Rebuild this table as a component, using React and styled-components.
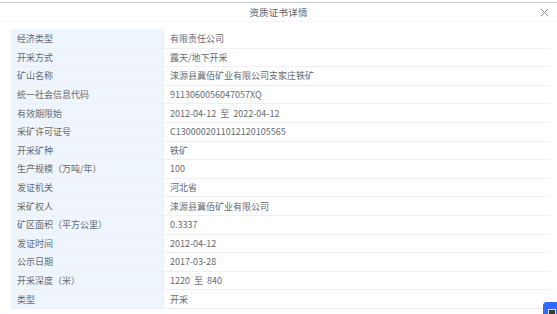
import React from 'react';
import styled, { createGlobalStyle } from 'styled-components';

const GlobalStyle = createGlobalStyle`
    html, body {
        margin: 0;
        padding: 0;
        background: #ffffff;
    }
    body {
        font-family: "Noto Sans CJK SC", "Noto Sans", sans-serif;
        overflow: hidden;
    }
`;

const rows = [
    ['经济类型', '有限责任公司'],
    ['开采方式', '露天/地下开采'],
    ['矿山名称', '涞源县冀佰矿业有限公司支家庄铁矿'],
    ['统一社会信息代码', '911306005604705 7XQ'.replace(' ', '')],
    ['有效期限始', '2012-04-12 \u00a0至\u00a0 2022-04-12'],
    ['采矿许可证号', 'C1300002011012120105565'],
    ['开采矿种', '铁矿'],
    ['生产规模（万吨/年）', '100'],
    ['发证机关', '河北省'],
    ['采矿权人', '涞源县冀佰矿业有限公司'],
    ['矿区面积（平方公里）', '0.3337'],
    ['发证时间', '2012-04-12'],
    ['公示日期', '2017-03-28'],
    ['开采深度（米）', '1220 \u00a0至\u00a0 840'],
    ['类型', '开采'],
];

const App = () => {
    return (
        <>
            <GlobalStyle />
            <Dialog>
                <Header>
                    <Title>资质证书详情</Title>
                    <Close>
                        <svg width="9" height="9" viewBox="0 0 10 10">
                            <path d="M1 1 L9 9 M9 1 L1 9" stroke="#8a8f99" strokeWidth="1.1" fill="none" />
                        </svg>
                    </Close>
                </Header>
                <Body>
                    <Table>
                        {rows.map(([label, value]) => (
                            <Row key={label}>
                                <Label>{label}</Label>
                                <Value>{value}</Value>
                            </Row>
                        ))}
                    </Table>
                </Body>
            </Dialog>
            <Widget>
                <WidgetDot />
            </Widget>
        </>
    );
};

const Dialog = styled.div`
    margin-top: 2px;
    border-top: 1px solid #c9cdd3;
    width: 557px;
    height: 311px;
    display: flex;
    flex-direction: column;
    background: #fff;
`;

const Header = styled.div`
    height: 18px;
    border-bottom: 1px solid #f3f4f7;
    display: flex;
    align-items: center;
    justify-content: center;
    position: relative;
`;

const Title = styled.div`
    font-size: 9.5px;
    color: #5d6168;
    letter-spacing: 0.2px;
`;

const Close = styled.div`
    position: absolute;
    right: 8px;
    top: 4px;
    width: 10px;
    height: 10px;
    display: flex;
    align-items: center;
    justify-content: center;
`;

const Body = styled.div`
    padding: 7px 7px 0 11px;
`;

const Table = styled.div`
    display: flex;
    flex-direction: column;
    border-bottom: 1px solid #edf1f7;
`;

const Row = styled.div`
    display: grid;
    grid-template-columns: 152px 1fr;
    height: 18.6px;
    border-top: 1px solid #edf1f7;
    box-sizing: border-box;
    font-size: 9px;
    color: #676b72;
    &:first-child {
        border-top: none;
    }
`;

const Label = styled.div`
    background: #eef5fc;
    padding-left: 6px;
    display: flex;
    align-items: center;
    white-space: nowrap;
`;

const Value = styled.div`
    padding-left: 6px;
    display: flex;
    align-items: center;
    white-space: pre;
    border-left: 1px solid #edf1f7;
`;

const Widget = styled.div`
    position: fixed;
    right: -4px;
    bottom: -6px;
    width: 18px;
    height: 18px;
    border-radius: 4px;
    background: #2f6cf5;
`;

const WidgetDot = styled.div`
    position: absolute;
    left: 5px;
    top: 7px;
    width: 6px;
    height: 6px;
    background: #3a3a3a;
    border: 1px solid #ddd;
`;

export default App;
